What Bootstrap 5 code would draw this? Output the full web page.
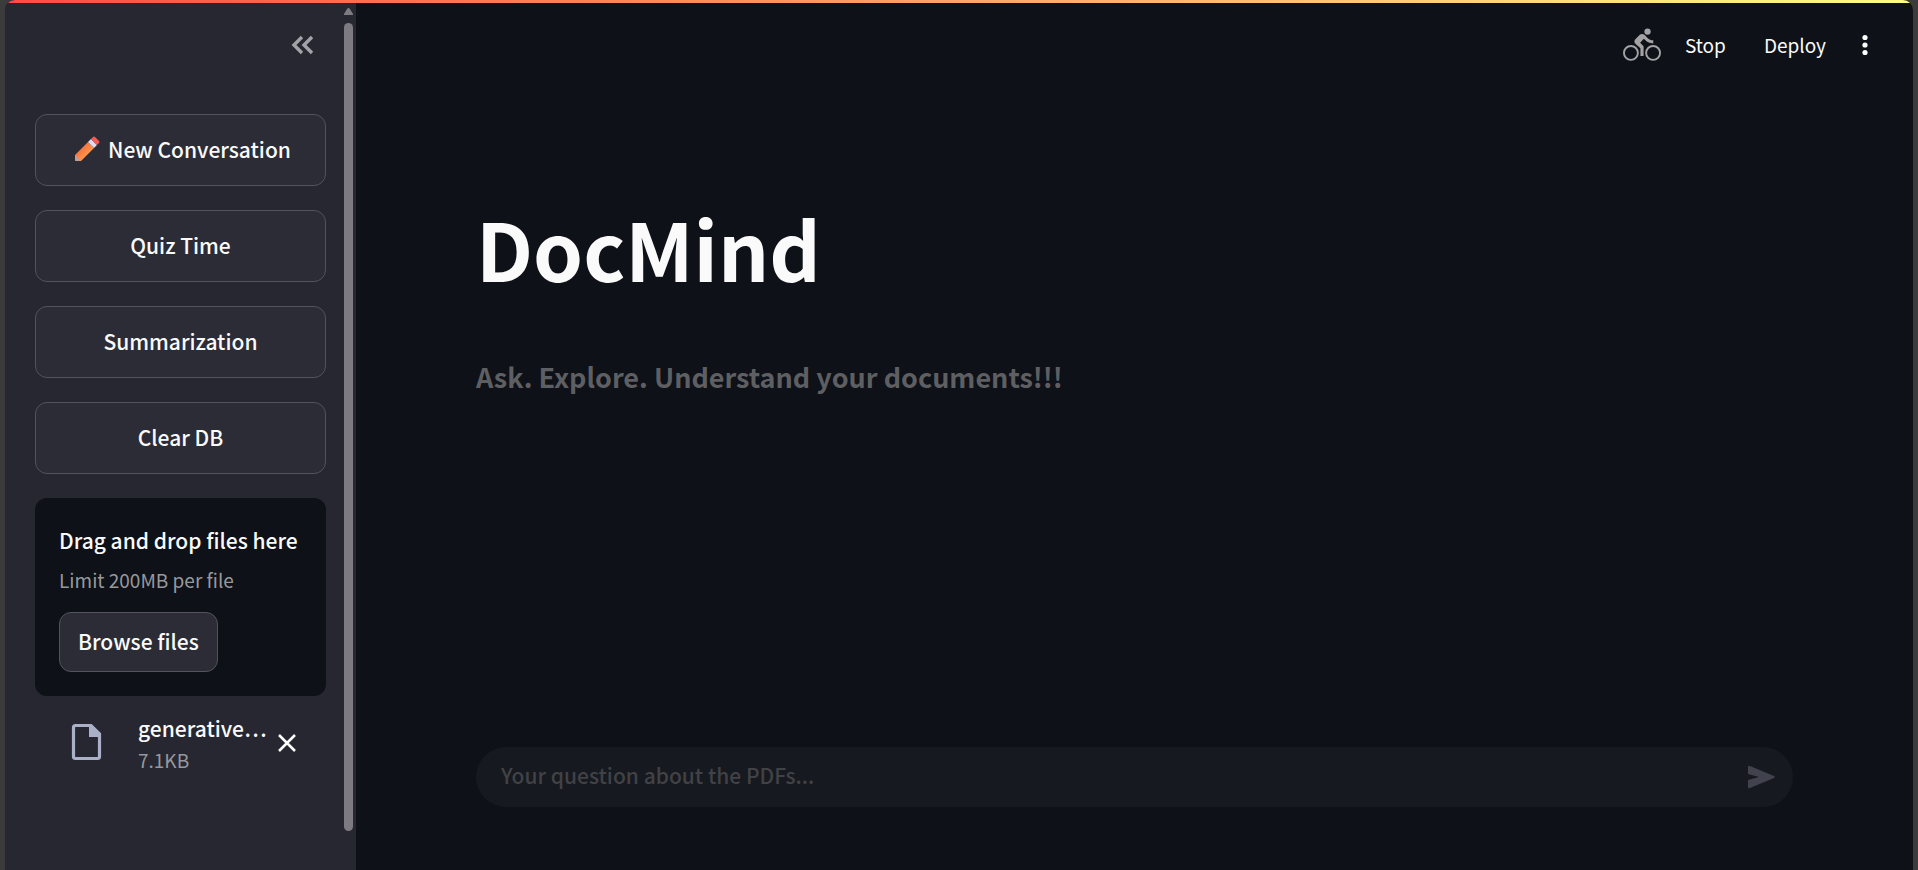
<!DOCTYPE html>
<html lang="en">
<head>
<meta charset="utf-8">
<meta name="viewport" content="width=device-width, initial-scale=1">
<title>DocMind</title>
<link href="https://cdn.jsdelivr.net/npm/bootstrap@5.3.0/dist/css/bootstrap.min.css" rel="stylesheet">
<style>
  :root { --ink: #fafafa; --page: #0e1117; --side: #262730; --ctl: #2b2c36; --line: #52535c; --muted: #97989d; }
  body { background: #3b3b3b; color: var(--ink); font-family: "Noto Sans CJK KR", "Noto Sans", sans-serif; font-size: 21px; font-weight: 500; line-height: 34px; }
  button, input { font-family: inherit; font-weight: inherit; }
  .app-shell { margin: 0 5px; background: var(--page); border-radius: 10px 10px 0 0; }
  .top-stripe { height: 3px; background: linear-gradient(90deg, #ff4b4b, #fffd80); }
  .side-panel { width: 351px; background: var(--side); }
  .side-body { padding: 18px 18px 0 30px; }
  .side-head { height: 93px; padding-right: 13px; }
  .ghost-btn { color: var(--ink); background: none; border: 0; padding: 0; line-height: 32px; }
  .ghost-btn svg { display: block; }
  .btn-dark-line { --bs-btn-color: var(--ink); --bs-btn-bg: var(--ctl); --bs-btn-border-color: var(--line); --bs-btn-hover-color: #fff; --bs-btn-hover-bg: #34353f; --bs-btn-hover-border-color: #7d7e86; --bs-btn-font-size: 21px; --bs-btn-font-weight: 500; --bs-btn-line-height: 34px; --bs-btn-border-radius: 12px; padding-top: 17px; padding-bottom: 19px; }
  .btn-dark-line svg { margin-left: 4px; }
  .btn-browse { --bs-btn-padding-x: 18px; padding-top: 11px; padding-bottom: 13px; }
  .drop-box { background: var(--page); border-radius: 12px; padding: 25px 24px 24px; }
  .fine-print { font-size: 19px; font-weight: 400; line-height: 30px; color: var(--muted); }
  .drop-box .fine-print { margin: 8px 0 17px; }
  .file-line { padding: 15px 28px 0 33px; }
  .scroll-rail { width: 9px; margin: 5px 3px 39px 0; }
  .scroll-thumb { background: #7d7b81; border-radius: 5px; }
  .tool-row { height: 84px; padding: 0 40px; font-size: 19px; font-weight: 400; }
  .tool-gap { margin-left: 38px; }
  .menu-gap { margin-left: 31px; }
  .main-col { padding: 0 120px; }
  .app-title { font-size: 80px; line-height: 96px; margin: 112px 0 0; }
  .app-tagline { font-size: 27px; line-height: 36px; margin: 64px 0 0; color: #5e5f62; }
  .ask-bar { height: 60px; border-radius: 30px; background: #16191f; margin-bottom: 63px; padding: 0 18px 0 25px; }
  .ask-bar input { font-size: 21px; padding: 0 0 4px; color: var(--ink); outline: 0; }
  .ask-bar input::placeholder { color: #414246; opacity: 1; }
</style>
</head>
<body>
<div class="app-shell d-flex flex-column min-vh-100 overflow-hidden">
  <div class="top-stripe"></div>
  <div class="d-flex flex-grow-1">
    <aside class="side-panel d-flex flex-shrink-0">
      <div class="side-body flex-grow-1 overflow-hidden">
        <div class="side-head d-flex justify-content-end align-items-start">
          <button class="ghost-btn" type="button" aria-label="Collapse sidebar">
            <svg width="22" height="48" viewBox="0 0 22 48" fill="none" stroke="#a3a3a7" stroke-width="3.400"><path d="m11 16-8 8 8 8M21 16l-8 8 8 8"/></svg>
          </button>
        </div>
        <div class="d-grid gap-4">
          <button class="btn btn-dark-line d-flex justify-content-center align-items-center" type="button">
            <svg class="me-2" width="26" height="26" viewBox="0 0 26 26" aria-hidden="true"><defs><linearGradient id="wood" x1="0" y1="0" x2="1" y2="1"><stop offset="0.300" stop-color="#f4703f"/><stop offset="0.700" stop-color="#ff9a4a"/></linearGradient></defs><path d="M1 19 14 6l6 6L7 25H2q-1 0-1-1z" fill="url(#wood)"/><path d="M1 20q3 0 5 5H2q-1 0-1-1z" fill="#c59a94"/><path d="m14 6 3-3 6 6-3 3z" fill="#dcdcf0"/><path d="m17 3 2-2q1-1 2 0l4 4q1 1 0 2l-2 2z" fill="#fb5a50"/></svg>
            New Conversation
          </button>
          <button class="btn btn-dark-line" type="button">Quiz Time</button>
          <button class="btn btn-dark-line" type="button">Summarization</button>
          <button class="btn btn-dark-line" type="button">Clear DB</button>
          <section class="drop-box" aria-label="File upload">
            <div class="text-nowrap">Drag and drop files here</div>
            <div class="fine-print">Limit 200MB per file</div>
            <button class="btn btn-dark-line btn-browse" type="button">Browse files</button>
          </section>
        </div>
        <div class="file-line d-flex align-items-start">
          <svg class="flex-shrink-0 mt-2" width="38" height="48" viewBox="0 0 38 48" fill="none" aria-hidden="true"><path d="M7.500 6.500H23l8.500 8.500v22.500q0 2-2 2h-22q-2 0-2-2v-29q0-2 2-2z" stroke="#a9b0c8" stroke-width="3.200"/><path d="M21 6v12h12v-3l-9-9z" fill="#a9b0c8"/></svg>
          <div class="flex-grow-1 ms-4 ps-2">
            <div class="text-nowrap">generative…</div>
            <div class="fine-print">7.1KB</div>
          </div>
          <button class="ghost-btn align-self-center" type="button" aria-label="Remove file">
            <svg width="22" height="22" viewBox="0 0 22 22" stroke="#fff" stroke-width="2.500"><path d="m3 3 16 16M19 3 3 19"/></svg>
          </button>
        </div>
      </div>
      <div class="scroll-rail d-flex flex-column" aria-hidden="true">
        <svg class="mb-2 flex-shrink-0" width="9" height="7"><path d="M3 1q1.500-2 3 0l3 5v1H0V6z" fill="#7d7b81"/></svg>
        <div class="scroll-thumb flex-grow-1"></div>
      </div>
    </aside>
    <div class="flex-grow-1 d-flex flex-column">
      <header class="tool-row d-flex justify-content-end align-items-center">
        <svg width="38" height="38" viewBox="0 0 24 24" fill="#a3a3a5" aria-hidden="true"><path d="M15.500 5.500a2 2 0 1 0 0-4 2 2 0 0 0 0 4zM5 12a5 5 0 1 0 0 10 5 5 0 0 0 0-10zm0 8.800a3.800 3.800 0 1 1 0-7.600 3.800 3.800 0 0 1 0 7.600zm5.800-10.300 2.400-2.400.8.8c1.300 1.300 3 2.100 5.100 2.100V9c-1.500 0-2.700-.6-3.600-1.500l-1.900-1.900c-.5-.4-1-.6-1.600-.6s-1.100.2-1.400.6L7.800 8.400c-.4.4-.6.9-.6 1.400 0 .6.2 1.100.6 1.400L11 14v5h2v-6.200zM19 12a5 5 0 1 0 0 10 5 5 0 0 0 0-10zm0 8.800a3.800 3.800 0 1 1 0-7.600 3.800 3.800 0 0 1 0 7.600z"/></svg>
        <button class="ghost-btn ms-4" type="button">Stop</button>
        <button class="ghost-btn tool-gap" type="button">Deploy</button>
        <button class="ghost-btn menu-gap" type="button" aria-label="Menu"><svg width="16" height="24" viewBox="0 0 16 24" fill="#fff"><circle cx="8" cy="4.500" r="2.600"/><circle cx="8" cy="12" r="2.600"/><circle cx="8" cy="19.500" r="2.600"/></svg></button>
      </header>
      <main class="main-col flex-grow-1 d-flex flex-column">
        <h1 class="app-title fw-bold">DocMind</h1>
        <h2 class="app-tagline fw-bold">Ask. Explore. Understand your documents!!!</h2>
        <form class="ask-bar d-flex align-items-center mt-auto">
          <input class="flex-grow-1 bg-transparent border-0" type="text" placeholder="Your question about the PDFs..." aria-label="Your question about the PDFs">
          <button class="ghost-btn" type="button" aria-label="Send"><svg width="28" height="24" viewBox="0 0 28 24" fill="#41424d"><path d="M1 2q0-2 2-1l24 10q1.500 1 0 2L3 23q-2 1-2-1v-7l11-3L1 9z"/></svg></button>
        </form>
      </main>
    </div>
  </div>
</div>
<script src="https://cdn.jsdelivr.net/npm/bootstrap@5.3.0/dist/js/bootstrap.bundle.min.js"></script>
</body>
</html>
